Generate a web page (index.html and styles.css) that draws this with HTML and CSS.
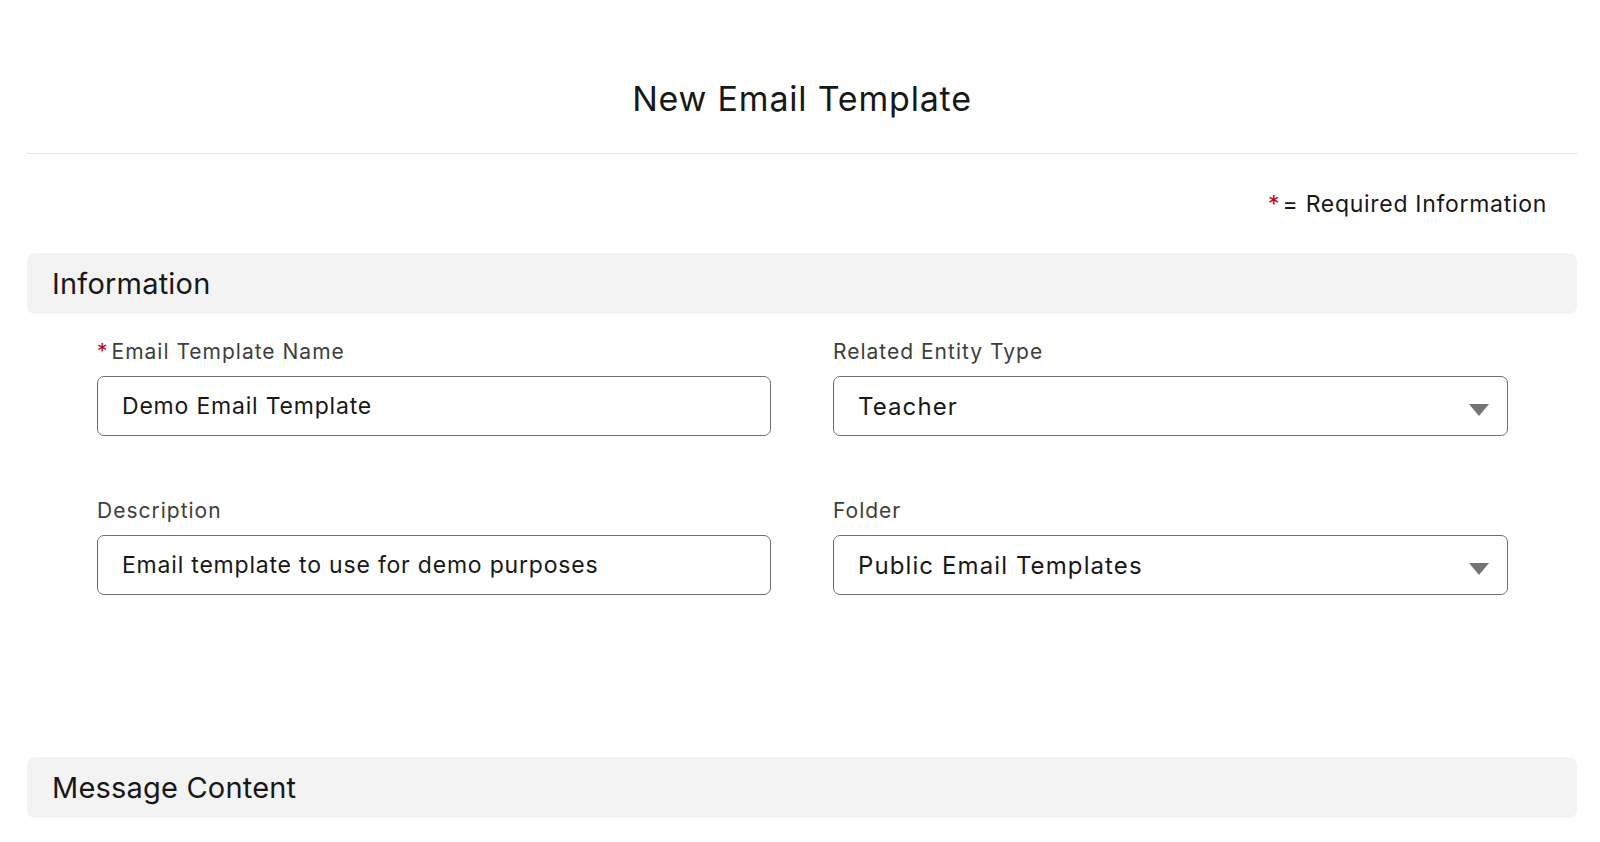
FILE: index.html
```html
<!DOCTYPE html>
<html lang="en">
<head>
<meta charset="utf-8">
<title>New Email Template</title>
<link rel="stylesheet" href="styles.css">
</head>
<body>
<div class="page">
  <header class="header">
    <h1 class="title">New Email Template</h1>
  </header>
  <div class="required-note"><span class="req">*</span>= Required Information</div>

  <section class="section">
    <h2 class="section-title">Information</h2>
  </section>

  <div class="form-grid">
    <div class="field">
      <label class="label"><span class="req">*</span>Email Template Name</label>
      <div class="input">Demo Email Template</div>
    </div>
    <div class="field">
      <label class="label">Related Entity Type</label>
      <div class="input select">Teacher
        <svg class="caret" width="20" height="12" viewBox="0 0 20 12"><path d="M0 0 H20 L10 12 Z" fill="#747474"/></svg>
      </div>
    </div>
    <div class="field">
      <label class="label">Description</label>
      <div class="input">Email template to use for demo purposes</div>
    </div>
    <div class="field">
      <label class="label">Folder</label>
      <div class="input select">Public Email Templates
        <svg class="caret" width="20" height="12" viewBox="0 0 20 12"><path d="M0 0 H20 L10 12 Z" fill="#747474"/></svg>
      </div>
    </div>
  </div>

  <section class="section section-msg">
    <h2 class="section-title">Message Content</h2>
  </section>
</div>
</body>
</html>
```

FILE: styles.css
```css
* { box-sizing: border-box; }

html, body {
  margin: 0;
  padding: 0;
  background: #ffffff;
}

body {
  font-family: Inter, "Noto Sans", "Liberation Sans", sans-serif;
  color: #181818;
  width: 1600px;
  height: 842px;
  overflow: hidden;
}

.page {
  padding: 0 23px 0 27px;
}

.header {
  padding-top: 82px;
  padding-bottom: 37px;
  border-bottom: 1px solid #e5e5e5;
}

.title {
  margin: 0;
  font-size: 34px;
  line-height: 34px;
  font-weight: 400;
  letter-spacing: 0.8px;
  text-align: center;
  color: #181818;
}

.required-note {
  margin-top: 39px;
  padding-right: 30px;
  text-align: right;
  font-size: 23px;
  line-height: 23px;
  letter-spacing: 0.7px;
  color: #181818;
}

.req {
  color: #ba0517;
  margin-right: 4px;
}

.required-note .req {
  margin-right: 3px;
  letter-spacing: 0;
}

.section {
  margin-top: 37px;
  height: 61px;
  background: #f3f3f3;
  border-radius: 8px;
  display: flex;
  align-items: center;
  padding-left: 25px;
}

.section-title {
  margin: 0;
  font-size: 29px;
  line-height: 29px;
  font-weight: 400;
  letter-spacing: 0.2px;
  color: #181818;
}

.form-grid {
  display: grid;
  grid-template-columns: 674px 675px;
  column-gap: 62px;
  row-gap: 65px;
  padding: 28px 0 0 70px;
}

.field {
  display: flex;
  flex-direction: column;
}

.label {
  font-size: 21px;
  line-height: 20px;
  letter-spacing: 1px;
  color: #3e3e3c;
  margin-bottom: 14px;
}

.label .req {
  margin-right: 4px;
  letter-spacing: 0;
}

.input {
  height: 60px;
  border: 1px solid #6f6f6f;
  border-radius: 7px;
  display: flex;
  align-items: center;
  padding-left: 24px;
  font-size: 23px;
  letter-spacing: 0.8px;
  color: #181818;
  position: relative;
}

.input.select {
  font-size: 24px;
  letter-spacing: 1.1px;
}

.select .caret {
  position: absolute;
  right: 18px;
  top: 27px;
}

.section-msg {
  margin-top: 162px;
}
```
